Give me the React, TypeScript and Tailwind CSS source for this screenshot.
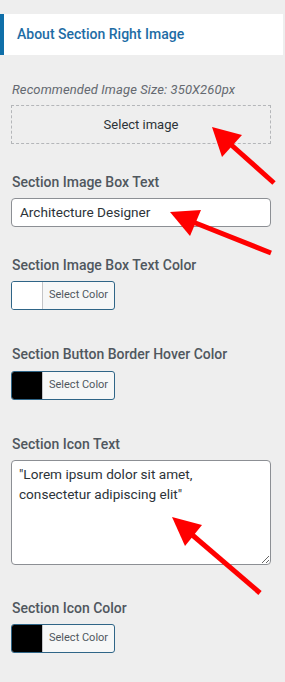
import React from "react";

function ColorButton({ swatch }: { swatch: string }) {
  return (
    <div className="flex h-[29px] w-[104px] overflow-hidden rounded-[3px] border border-[#2f6587] bg-[#f6f7f7]">
      <div className="h-full w-[31px] border-r border-[#c3c4c7]" style={{ backgroundColor: swatch }} />
      <div className="flex flex-1 items-center pl-[6px] text-[11px] text-[#50575e]">Select Color</div>
    </div>
  );
}

export default function App() {
  return (
    <div
      className="relative min-h-[682px] w-full overflow-hidden bg-[#eeeeee] pt-[14px]"
      style={{ fontFamily: "Roboto, 'Noto Sans', sans-serif" }}
    >
      <div className="mr-[2px] flex h-[41px] items-center border-l-4 border-[#0f6fa9] bg-white pl-[13px]">
        <span className="text-[14px] font-medium text-[#1d6ca5]">About Section Right Image</span>
      </div>

      <div className="flex flex-col px-[11px]">
        <div className="mt-[27px] pl-px text-[13px] leading-[16px] tracking-[0.1px] italic text-[#646970]">
          Recommended Image Size: 350X260px
        </div>
        <div className="mt-[7px] flex h-[39px] w-[260px] items-center justify-center border border-dashed border-[#b4b6b9] text-[13px] text-[#2c3338]">
          Select image
        </div>

        <div className="mt-[28px] pl-px text-[14px] leading-[20px] font-medium text-[#50575e]">Section Image Box Text</div>
        <div className="mt-[6px] flex h-[29px] w-[260px] items-center rounded-[4px] border border-[#8c8f94] bg-white pl-[8px] text-[13.6px] text-[#2c3338]">
          Architecture Designer
        </div>

        <div className="mt-[28px] pl-px text-[14px] leading-[20px] font-medium text-[#50575e]">Section Image Box Text Color</div>
        <div className="mt-[6px]">
          <ColorButton swatch="#ffffff" />
        </div>

        <div className="mt-[34px] pl-px text-[14px] leading-[20px] font-medium text-[#50575e]">Section Button Border Hover Color</div>
        <div className="mt-[7px]">
          <ColorButton swatch="#000000" />
        </div>

        <div className="mt-[34px] pl-px text-[14px] leading-[20px] font-medium text-[#50575e]">Section Icon Text</div>
        <textarea
          className="mt-[6px] h-[105px] w-[260px] rounded-[4px] border border-[#8c8f94] bg-white px-[7px] py-[3px] text-[13.6px] leading-[20px] text-[#2c3338] outline-none"
          style={{ fontFamily: "Roboto, 'Noto Sans', sans-serif" }}
          defaultValue={'"Lorem ipsum dolor sit amet, consectetur adipiscing elit"'}
        />

        <div className="mt-[33px] pl-px text-[14px] leading-[20px] font-medium text-[#50575e]">Section Icon Color</div>
        <div className="mt-[6px]">
          <ColorButton swatch="#000000" />
        </div>
      </div>

      <svg className="pointer-events-none absolute left-0 top-0" width="285" height="682" viewBox="0 0 285 682">
        <g fill="#ff0000" stroke="#ff0000" strokeLinecap="butt">
          <line x1="228" y1="142" x2="274" y2="183" strokeWidth="5" />
          <polygon points="212,127 242,135 222,157" stroke="none" />
          <line x1="193" y1="222" x2="271" y2="253" strokeWidth="5" />
          <polygon points="170,212 201,210 190,236" stroke="none" />
          <line x1="190" y1="533" x2="260" y2="593" strokeWidth="5" />
          <polygon points="172,517 202,525 185,546" stroke="none" />
        </g>
      </svg>
    </div>
  );
}
